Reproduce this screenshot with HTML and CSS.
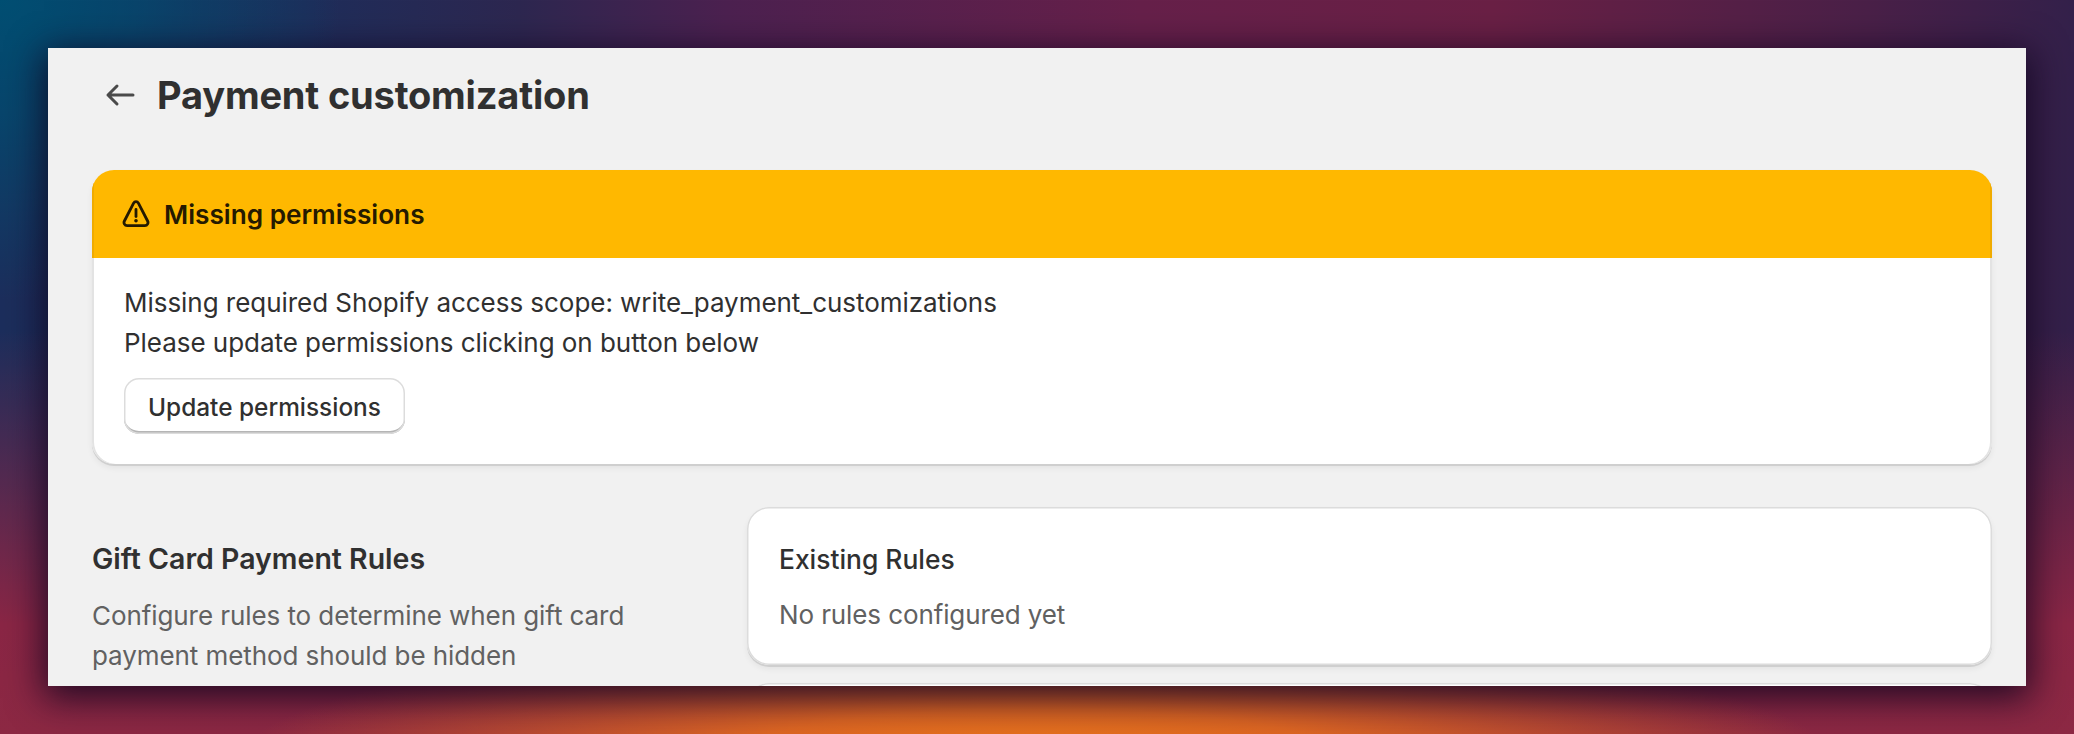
FILE: index.html
```html
<!DOCTYPE html>
<html lang="en">
<head>
<meta charset="utf-8">
<title>Payment customization</title>
<link rel="stylesheet" href="styles.css">
</head>
<body>
<main class="window">
  <header class="page-header">
    <svg class="back-icon" viewBox="0 0 30 24" aria-hidden="true"><path d="M28 12H3M12 3l-9 9 9 9"/></svg>
    <h1 class="page-title">Payment customization</h1>
  </header>
  <section class="banner">
    <div class="banner-head">
      <svg class="warn-icon" viewBox="0 0 28 28" aria-hidden="true">
        <path class="warn-line" d="M11.6 3.2 2.4 21c-1.1 2.2.3 4.6 2.7 4.6h17.8c2.4 0 3.8-2.4 2.7-4.6L16.4 3.2c-1.1-2-3.7-2-4.8 0Z"/>
        <path class="warn-line" d="M14 9.5v7"/>
        <circle class="warn-dot" cx="14" cy="20.8" r="1.8"/>
      </svg>
      <h2 class="banner-title">Missing permissions</h2>
    </div>
    <div class="banner-body">
      <p class="body-line">Missing required Shopify access scope: write_payment_customizations</p>
      <p class="body-line">Please update permissions clicking on button below</p>
      <button class="btn" type="button">Update permissions</button>
    </div>
  </section>
  <section class="layout">
    <div class="aside">
      <h2 class="section-title">Gift Card Payment Rules</h2>
      <p class="section-desc">Configure rules to determine when gift card payment method should be hidden</p>
    </div>
    <div class="cards">
      <div class="card card-rules">
        <h3 class="card-title">Existing Rules</h3>
        <p class="card-note">No rules configured yet</p>
      </div>
      <div class="card card-next"></div>
    </div>
  </section>
</main>
</body>
</html>
```
FILE: styles.css
```css
* { box-sizing: border-box; }
html, body { margin: 0; height: 100%; }
body {
  width: 2074px;
  height: 734px;
  overflow: hidden;
  padding: 48px;
  font-family: Inter, "Liberation Sans", sans-serif;
  color: #303030;
  background:
    radial-gradient(ellipse 800px 135px at 50% 104%, #f07c18 0%, rgba(232,110,30,.88) 40%, rgba(190,60,50,0) 100%),
    radial-gradient(ellipse 340px 300px at 0% 0%, #004e72 0%, rgba(0,78,114,.7) 40%, rgba(0,78,114,0) 100%),
    linear-gradient(180deg, rgba(138,38,69,0) 45%, #8a2645 85%, #8c2843 100%),
    linear-gradient(90deg, #1c2e5c 0%, #1f2d5a 15%, #2d2750 25%, #4c2150 35%, #66204a 55%, #6a2045 72%, #4a2048 90%, #33204a 100%);
}
.window {
  width: 1978px;
  height: 638px;
  overflow: hidden;
  padding: 0 34px 0 44px;
  background: #f1f1f1;
  box-shadow: 0 8px 34px 4px rgba(15, 5, 30, .85);
}
.page-header {
  display: flex;
  align-items: center;
  height: 93px;
  padding-left: 13px;
  margin-bottom: 29px;
}
.back-icon {
  width: 30px;
  height: 24px;
  margin-right: 22px;
  fill: none;
  stroke: #4a4a4a;
  stroke-width: 3;
  stroke-linecap: round;
  stroke-linejoin: round;
}
.page-title {
  margin: 0;
  font-size: 38px;
  line-height: 48px;
  font-weight: 700;
  letter-spacing: -.18px;
}
.banner {
  border-radius: 22px;
  overflow: hidden;
  background: #fff;
  box-shadow: 0 2px 0 #cfcfcf, 0 4px 6px rgba(0,0,0,.06), inset 2px 0 0 #e3e3e3, inset -2px 0 0 #e3e3e3;
  height: 294px;
  margin-bottom: 43px;
}
.banner-head {
  display: flex;
  align-items: center;
  height: 88px;
  padding-left: 30px;
  background: #ffb800;
  box-shadow: inset 2px 0 0 #f0ab00, inset -2px 0 0 #f0ab00;
}
.warn-icon { width: 28px; height: 28px; margin-right: 14px; }
.warn-line { fill: none; stroke: #251a00; stroke-width: 2.8; stroke-linecap: round; stroke-linejoin: round; }
.warn-dot { fill: #251a00; }
.banner-title {
  margin: 1px 0 0;
  font-size: 26.2px;
  line-height: 40px;
  font-weight: 600;
  color: #251a00;
}
.banner-body { padding: 25px 32px 0; }
.body-line { margin: 0; font-size: 26px; line-height: 40px; letter-spacing: -.04px; }
.btn {
  display: block;
  width: 281px;
  height: 56px;
  margin-top: 15px;
  padding: 2px 0 0;
  border: 0;
  border-radius: 15px;
  background: #fff;
  color: #303030;
  font: 500 24.4px/32px Inter, "Liberation Sans", sans-serif;
  box-shadow: inset 0 0 0 1.5px #dcdcdc, inset 0 -3px 0 #b5b5b5;
}
.layout { display: flex; }
.aside { width: 655px; flex: none; padding-top: 32px; }
.section-title { margin: 0 0 17px; font-size: 28.5px; line-height: 40px; font-weight: 600; }
.section-desc { margin: 0; width: 560px; font-size: 26px; line-height: 40px; color: #616161; letter-spacing: -.08px; }
.cards { flex: 1; display: flex; flex-direction: column; gap: 18px; }
.card {
  border-radius: 22px;
  background: #fff;
  box-shadow: 0 2px 0 #cfcfcf, 0 4px 6px rgba(0,0,0,.06), inset 0 0 0 1.5px #dcdcdc;
}
.card-rules { height: 158px; padding: 32px 32px 0; }
.card-next { height: 120px; }
.card-title { margin: 0 0 16px; font-size: 26.4px; line-height: 40px; font-weight: 500; }
.card-note { margin: 0; font-size: 26px; line-height: 40px; color: #616161; letter-spacing: -.11px; }
```
